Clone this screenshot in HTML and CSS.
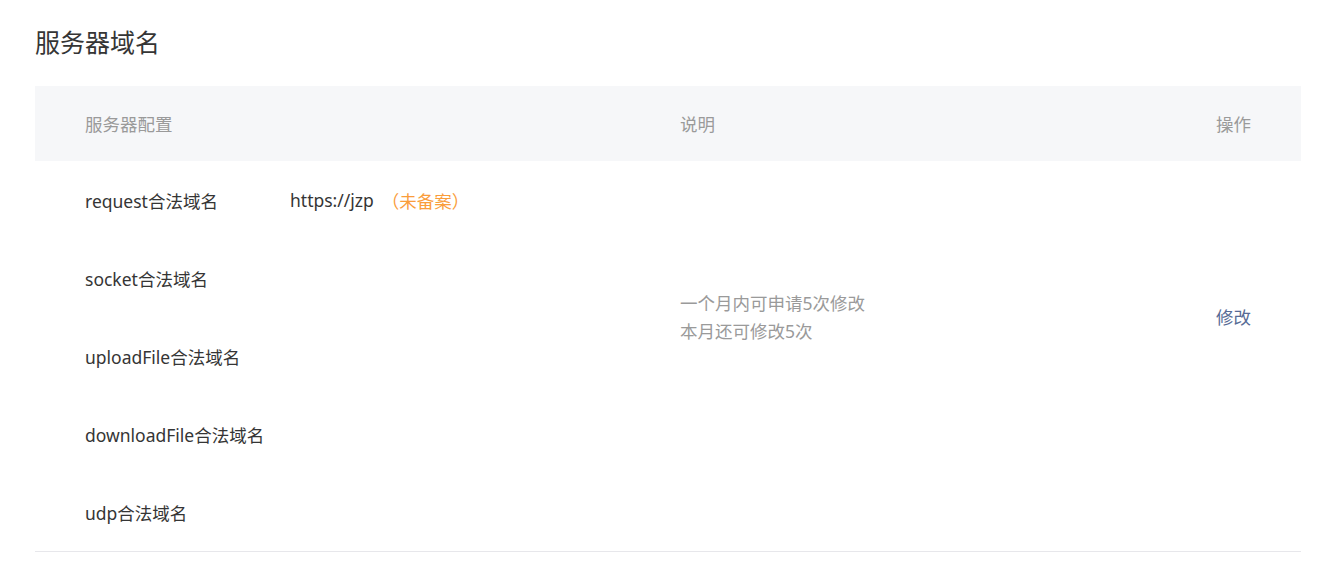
FILE: index.html
```html
<!DOCTYPE html>
<html lang="zh-CN">
<head>
    <meta charset="UTF-8">
    <meta name="viewport" content="width=device-width, initial-scale=1.0">
    <title>服务器域名</title>
    <link rel="stylesheet" href="styles.css">
</head>
<body>
    <div class="page">
        <h2 class="page-title">服务器域名</h2>

        <div class="domain-table">
            <div class="table-head">
                <div class="col-config">服务器配置</div>
                <div class="col-desc">说明</div>
                <div class="col-action">操作</div>
            </div>

            <div class="table-body">
                <div class="col-config">
                    <div class="domain-row">
                        <span class="domain-label">request合法域名</span>
                        <span class="domain-value">https://jzp</span>
                        <span class="domain-tag">（未备案）</span>
                    </div>
                    <div class="domain-row">
                        <span class="domain-label">socket合法域名</span>
                    </div>
                    <div class="domain-row">
                        <span class="domain-label">uploadFile合法域名</span>
                    </div>
                    <div class="domain-row">
                        <span class="domain-label">downloadFile合法域名</span>
                    </div>
                    <div class="domain-row">
                        <span class="domain-label">udp合法域名</span>
                    </div>
                </div>
                <div class="col-desc">
                    <p>一个月内可申请5次修改</p>
                    <p>本月还可修改5次</p>
                </div>
                <div class="col-action">
                    <a href="#" class="action-link">修改</a>
                </div>
            </div>
        </div>
    </div>
</body>
</html>
```

FILE: styles.css
```css
:root {
    --text-color: #353535;
    --muted-color: #9a9a9a;
    --link-color: #576b95;
    --warn-color: #fa9d3b;
    --head-bg: #f6f7f9;
    --border-color: #e7e7eb;
}

body {
    margin: 0;
    padding: 0;
    font-family: "Noto Sans", "Noto Sans CJK SC", sans-serif;
    color: var(--text-color);
    background: #fff;
}

.page {
    padding: 24px 27px 0 35px;
}

.page-title {
    margin: 0 0 26px;
    font-size: 25px;
    font-weight: normal;
    line-height: 36px;
    color: var(--text-color);
}

.domain-table {
    font-size: 17.5px;
    border-bottom: 1px solid var(--border-color);
}

.table-head,
.table-body {
    display: grid;
    grid-template-columns: 595px 1fr auto;
    padding: 0 50px;
}

.table-head {
    height: 75px;
    align-items: center;
    background: var(--head-bg);
    color: var(--muted-color);
}

.domain-row {
    display: flex;
    align-items: center;
    height: 78px;
}

.domain-label {
    width: 205px;
}

.domain-tag {
    margin-left: 8px;
    color: var(--warn-color);
}

.table-body .col-desc {
    padding-top: 128px;
    color: var(--muted-color);
}

.table-body .col-desc p {
    margin: 0;
    line-height: 28px;
}

.table-body .col-action {
    padding-top: 142px;
    line-height: 28px;
}

.action-link {
    color: var(--link-color);
    text-decoration: none;
}
```
